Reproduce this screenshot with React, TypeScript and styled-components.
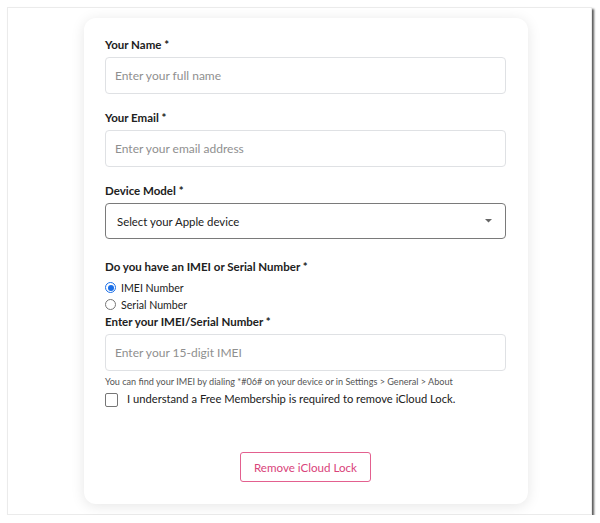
import styled, { createGlobalStyle } from "styled-components";

const GlobalStyle = createGlobalStyle`
  html, body {
    margin: 0;
    padding: 0;
    background: #ffffff;
  }
  body {
    font-family: Lato, "Noto Sans", sans-serif;
    color: #212529;
  }
`;

const Frame = styled.div`
  box-sizing: border-box;
  margin: 7px 0 0 7px;
  width: 585px;
  height: 508px;
  border: 1px solid #ebebeb;
  box-shadow: 2px 2px 2px rgba(0, 0, 0, 0.65);
  padding: 10px 0 0 76px;
  background: #fff;
`;

const Card = styled.form`
  box-sizing: border-box;
  width: 444px;
  height: 486px;
  background: #fff;
  border-radius: 12px;
  box-shadow: 0 2px 14px rgba(0, 0, 0, 0.1);
  padding: 19px 22px 22px 21px;
  display: flex;
  flex-direction: column;
`;

const Field = styled.div<{ $gap?: number }>`
  display: flex;
  flex-direction: column;
  margin-bottom: ${(p) => p.$gap ?? 16}px;
`;

const Label = styled.label`
  font-size: 11.5px;
  line-height: 16px;
  font-weight: 700;
  color: #212121;
  margin-bottom: 4px;
`;

const TextInput = styled.input`
  box-sizing: border-box;
  height: 37px;
  width: 100%;
  border: 1px solid #dfe1e4;
  border-radius: 4px;
  padding: 0 9px;
  font-family: inherit;
  font-size: 12px;
  color: #212121;
  outline: none;
  &::placeholder {
    color: #8f8f8f;
  }
`;

const SelectBox = styled.div`
  box-sizing: border-box;
  height: 36px;
  border: 1px solid #7a7a7a;
  border-radius: 4px;
  padding: 0 13px 0 11px;
  display: flex;
  align-items: center;
  justify-content: space-between;
  font-size: 11.4px;
  color: #212121;
`;

const RadioRow = styled.label`
  display: flex;
  align-items: center;
  gap: 5px;
  height: 17px;
  font-size: 10.6px;
  color: #212121;
`;

const RadioDot = styled.span<{ $on?: boolean }>`
  box-sizing: border-box;
  width: 11px;
  height: 11px;
  border-radius: 50%;
  border: ${(p) => (p.$on ? "1.5px solid #1a6fe8" : "1px solid #767676")};
  display: flex;
  align-items: center;
  justify-content: center;
  &::after {
    content: "";
    width: 6px;
    height: 6px;
    border-radius: 50%;
    background: ${(p) => (p.$on ? "#1a6fe8" : "transparent")};
  }
`;

const Help = styled.div`
  font-size: 9.1px;
  line-height: 12px;
  color: #555;
  margin-top: 5px;
`;

const CheckRow = styled.label`
  display: flex;
  align-items: center;
  gap: 9px;
  margin-top: 1px;
  font-size: 11.2px;
  color: #212121;
`;

const CheckBox = styled.span`
  box-sizing: border-box;
  width: 13px;
  height: 14px;
  border: 1px solid #767676;
  border-radius: 2px;
  margin-top: 4px;
`;

const ButtonRow = styled.div`
  margin-top: auto;
  display: flex;
  justify-content: center;
`;

const SubmitButton = styled.button`
  box-sizing: border-box;
  width: 131px;
  height: 30px;
  background: #fff;
  border: 1px solid #e3608f;
  border-radius: 3px;
  color: #d9437a;
  font-family: inherit;
  font-size: 11.6px;
  cursor: pointer;
`;

const Caret = () => (
  <svg width="7" height="4" viewBox="0 0 7 4">
    <path d="M0 0h7L3.5 3.5z" fill="#666" />
  </svg>
);

export default function App() {
  return (
    <>
      <GlobalStyle />
      <Frame>
        <Card onSubmit={(e) => e.preventDefault()}>
          <Field>
            <Label>Your Name *</Label>
            <TextInput placeholder="Enter your full name" />
          </Field>
          <Field>
            <Label>Your Email *</Label>
            <TextInput placeholder="Enter your email address" />
          </Field>
          <Field $gap={20}>
            <Label>Device Model *</Label>
            <SelectBox>
              <span>Select your Apple device</span>
              <Caret />
            </SelectBox>
          </Field>
          <Field $gap={1}>
            <Label>Do you have an IMEI or Serial Number *</Label>
            <RadioRow>
              <RadioDot $on />
              IMEI Number
            </RadioRow>
            <RadioRow>
              <RadioDot />
              Serial Number
            </RadioRow>
          </Field>
          <Field $gap={0}>
            <Label>Enter your IMEI/Serial Number *</Label>
            <TextInput placeholder="Enter your 15-digit IMEI" />
            <Help>
              You can find your IMEI by dialing *#06# on your device or in Settings &gt; General &gt; About
            </Help>
          </Field>
          <CheckRow>
            <CheckBox />
            I understand a Free Membership is required to remove iCloud Lock.
          </CheckRow>
          <ButtonRow>
            <SubmitButton type="submit">Remove iCloud Lock</SubmitButton>
          </ButtonRow>
        </Card>
      </Frame>
    </>
  );
}
